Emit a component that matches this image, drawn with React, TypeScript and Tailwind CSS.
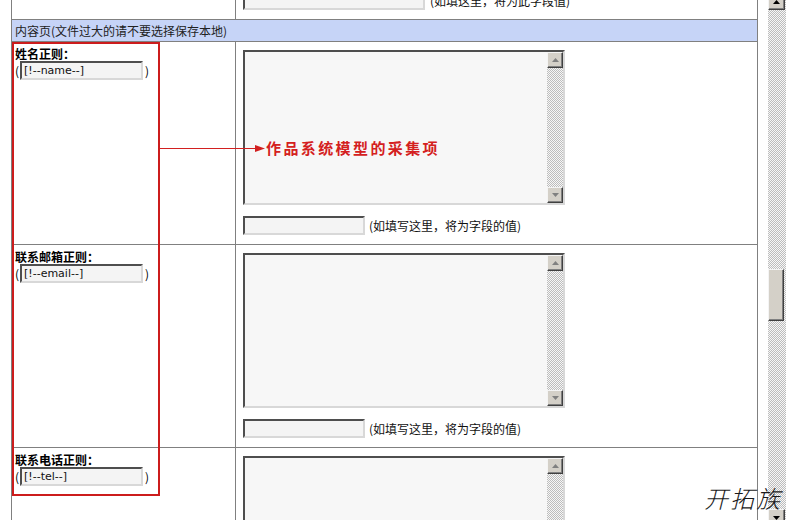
import React from "react";

const CHECKER =
  "bg-[image:repeating-conic-gradient(#bdbdbd_0%_25%,#f7f7f7_0%_50%)] bg-[length:2px_2px]";

function Arrow({ dir, dark }: { dir: "up" | "down"; dark?: boolean }) {
  const fill = dark ? "#000" : "#808080";
  return (
    <svg width="7" height="4" viewBox="0 0 7 4">
      {dir === "up" ? (
        <polygon points="3.5,0 7,4 0,4" fill={fill} />
      ) : (
        <polygon points="0,0 7,0 3.5,4" fill={fill} />
      )}
    </svg>
  );
}

function ScrollBtn({ dir, dark, cls }: { dir: "up" | "down"; dark?: boolean; cls?: string }) {
  return (
    <div
      className={
        "flex items-center justify-center bg-[#d4d0c8] border-t border-l border-t-[#f4f4f4] border-l-[#f4f4f4] border-b border-r border-b-[#404040] border-r-[#404040] shadow-[inset_-1px_-1px_0_#808080] " +
        (cls ?? "")
      }
    >
      <Arrow dir={dir} dark={dark} />
    </div>
  );
}

function FakeTextarea() {
  return (
    <div className="flex w-[322px] h-[155px] border-2 border-t-[#4e4e4e] border-l-[#4e4e4e] border-b-[#d8d8d8] border-r-[#d8d8d8] bg-[#f7f7f7]">
      <div className="flex-1" />
      <div className={"w-[16px] flex flex-col " + CHECKER}>
        <ScrollBtn dir="up" cls="h-[16px] w-[16px]" />
        <div className="flex-1" />
        <ScrollBtn dir="down" cls="h-[16px] w-[16px]" />
      </div>
    </div>
  );
}

function FakeInput({ w, value }: { w: string; value?: string }) {
  return (
    <div
      className={
        "h-[19px] border-2 border-t-[#4e4e4e] border-l-[#4e4e4e] border-b-[#d8d8d8] border-r-[#d8d8d8] bg-[#f4f4f4] flex items-center pl-[2px] font-['DejaVu_Sans',sans-serif] text-[11px] leading-[13px] text-[#111] " +
        w
      }
    >
      {value}
    </div>
  );
}

function Row({ label, code }: { label: string; code: string }) {
  return (
    <div className="flex h-[203px] border-b border-[#808080]">
      <div className="w-[224px] border-r border-[#808080] pl-[3px] pt-[5px]">
        <div className="font-bold leading-[14px]">{label}</div>
        <div className="flex items-center">
          <span className="w-[5px] leading-[19px]">(</span>
          <FakeInput w="w-[123px]" value={code} />
          <span className="ml-[2px]">)</span>
        </div>
      </div>
      <div className="flex-1 pl-[7px] pt-[8px]">
        <FakeTextarea />
        <div className="flex items-center mt-[11px]">
          <FakeInput w="w-[122px]" />
          <span className="ml-[4px] text-[#111]">(如填写这里，将为字段的值)</span>
        </div>
      </div>
    </div>
  );
}

export default function App() {
  return (
    <div className="relative w-[786px] h-[520px] overflow-hidden bg-white flex font-['Noto_Sans_CJK_SC',sans-serif] text-[12px] leading-[14px] text-black">
      <div className="w-[768px] pl-[11px] pr-[10px]">
        <div className="border-x border-[#808080]">
          {/* top (cut) row */}
          <div className="flex h-[20px] border-b border-[#808080] overflow-hidden">
            <div className="w-[224px] border-r border-[#808080]" />
            <div className="flex-1 flex items-end pl-[7px] pb-[9px]">
              <div className="flex items-center">
                <FakeInput w="w-[182px]" />
                <span className="ml-[5px] text-[#111]">(如填这里，将为此字段值)</span>
              </div>
            </div>
          </div>
          {/* header */}
          <div className="h-[22px] bg-[#c6d4f7] border-b border-[#808080] flex items-center pl-[3px] text-[#222]">
            内容页(文件过大的请不要选择保存本地)
          </div>
          <Row label="姓名正则：" code="[!--name--]" />
          <Row label="联系邮箱正则：" code="[!--email--]" />
          <Row label="联系电话正则：" code="[!--tel--]" />
        </div>
      </div>

      {/* page scrollbar */}
      <div className={"w-[18px] h-[520px] flex flex-col " + CHECKER}>
        <ScrollBtn dir="up" dark cls="h-[17px] w-[17px] mt-[-7px] shrink-0" />
        <div className="mt-[259px] h-[52px] w-[16px] shrink-0 bg-[#d4d0c8] border-t border-l border-t-[#f4f4f4] border-l-[#f4f4f4] border-b border-r border-b-[#404040] border-r-[#404040] shadow-[inset_-1px_-1px_0_#808080]" />
        <div className="flex-1" />
        <ScrollBtn dir="down" dark cls="h-[17px] w-[17px] mb-[-6px] shrink-0" />
      </div>

      {/* red annotation box */}
      <div className="absolute left-[12px] top-[42px] w-[148px] h-[454px] border-2 border-[#cc1c1c]" />
      {/* arrow */}
      <div className="absolute left-[160px] top-[148px] w-[98px] h-[1px] bg-[#d22020]" />
      <svg className="absolute left-[255px] top-[145px]" width="10" height="7" viewBox="0 0 10 7">
        <polygon points="0,0 10,3.5 0,7" fill="#d22020" />
      </svg>
      <div className="absolute left-[266px] top-[139px] text-[15px] leading-[18px] font-bold tracking-[2.4px] text-[#d42020] whitespace-nowrap">
        作品系统模型的采集项
      </div>

      {/* watermark */}
      <div className="absolute left-[704px] top-[484px] text-[24px] leading-[28px] font-light tracking-[2px] text-[#1a1a1a] italic whitespace-nowrap">
        开拓族
      </div>
    </div>
  );
}
